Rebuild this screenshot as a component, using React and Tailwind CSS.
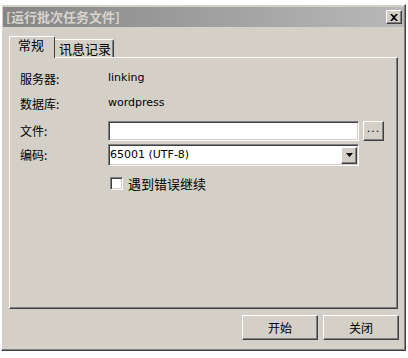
import { useState } from 'react';

const CJK = { fontFamily: '"SimSun", "Noto Sans CJK SC", sans-serif' };
const LATIN = { fontFamily: 'Tahoma, "DejaVu Sans", "Noto Sans CJK SC", sans-serif' };

// raised win-classic edge
const raised = 'border border-t-white border-l-white border-r-[#404040] border-b-[#404040] shadow-[inset_-1px_-1px_0_#808080]';
const sunken = 'border border-t-[#808080] border-l-[#808080] border-r-white border-b-white shadow-[inset_1px_1px_0_#404040,inset_-1px_-1px_0_#d4d0c8]';

function Button({ children, className = '' }) {
  return (
    <button className={`${raised} bg-[#d4d0c8] text-[12px] text-black flex items-center justify-center ${className}`} style={CJK}>
      {children}
    </button>
  );
}

export default function App() {
  const [tab, setTab] = useState(0);
  const [cont, setCont] = useState(false);

  return (
    <div className="w-[408px] h-[358px] bg-white pt-[4px] pl-[1px]">
      <div className={`w-[405px] h-[347px] bg-[#d4d0c8] ${raised} p-[1px] flex flex-col`}>
        {/* title bar */}
        <div className="h-[20px] mt-[1px] bg-gradient-to-r from-[#858585] to-[#b9b9b9] flex items-center justify-between pl-[3px] pr-[2px]">
          <span className="text-[13px] font-bold text-[#d8d4cc] leading-[20px]" style={CJK}>[运行批次任务文件]</span>
          <div className={`w-[16px] h-[14px] bg-[#d4d0c8] ${raised} flex items-center justify-center`}>
            <svg width="8" height="7" viewBox="0 0 8 7">
              <path d="M0 0h2l2 2 2-2h2L5 3.5 8 7H6L4 5 2 7H0l3-3.5z" fill="#000" />
            </svg>
          </div>
        </div>

        {/* tabs */}
        <div className="flex items-end pl-[6px] mt-[8px] h-[22px]">
          <div
            onClick={() => setTab(0)}
            className="relative z-10 h-[22px] w-[46px] border-l border-t border-white border-r border-r-[#404040] rounded-t-[2px] bg-[#d4d0c8] text-[13px] pl-[8px] leading-[16px] -mb-[1px]"
            style={CJK}
          >
            常规
          </div>
          <div
            onClick={() => setTab(1)}
            className="h-[18px] w-[59px] border-t border-white border-r border-r-[#404040] shadow-[inset_-1px_0_0_#808080] rounded-tr-[2px] text-[13px] pl-[4px] leading-[17px]"
            style={CJK}
          >
            讯息记录
          </div>
        </div>

        {/* panel */}
        <div className="mx-[6px] h-[252px] border border-t-white border-l-white border-r-[#404040] border-b-[#404040] shadow-[inset_-1px_-1px_0_#808080] pt-[8px] pl-[10px] text-[12px] text-black">
          <div className="flex items-center h-[25px]">
            <span className="w-[88px]" style={CJK}>服务器:</span>
            <span className="text-[11px]" style={LATIN}>linking</span>
          </div>
          <div className="flex items-center h-[25px]">
            <span className="w-[88px]" style={CJK}>数据库:</span>
            <span className="text-[11px]" style={LATIN}>wordpress</span>
          </div>
          <div className="flex items-center h-[20px] mt-[5px]">
            <span className="w-[88px]" style={CJK}>文件:</span>
            <div className={`w-[251px] h-[20px] bg-white ${sunken}`} />
            <Button className="w-[21px] h-[20px] ml-[4px] pb-[4px]">
              <span style={LATIN} className="text-[11px] tracking-[1px]">...</span>
            </Button>
          </div>
          <div className="flex items-center h-[22px] mt-[3px]">
            <span className="w-[88px]" style={CJK}>编码:</span>
            <div className={`w-[251px] h-[22px] bg-white ${sunken} flex items-center justify-between pl-[1px] pr-[1px]`}>
              <span className="text-[11px]" style={LATIN}>65001 (UTF-8)</span>
              <div className={`w-[16px] h-[17px] bg-[#d4d0c8] ${raised} flex items-center justify-center`}>
                <svg width="7" height="4" viewBox="0 0 7 4"><path d="M0 0h7L3.5 4z" fill="#000" /></svg>
              </div>
            </div>
          </div>
          <div className="flex items-center h-[13px] mt-[11px] pl-[90px]">
            <div
              onClick={() => setCont(!cont)}
              className={`w-[13px] h-[13px] bg-white ${sunken}`}
            />
            <span className="ml-[5px] text-[13px]" style={CJK}>遇到错误继续</span>
          </div>
        </div>

        {/* buttons */}
        <div className="flex justify-end gap-[5px] mt-[6px] pr-[5px]">
          <Button className="w-[76px] h-[25px]">开始</Button>
          <Button className="w-[76px] h-[25px]">关闭</Button>
        </div>
      </div>
    </div>
  );
}
